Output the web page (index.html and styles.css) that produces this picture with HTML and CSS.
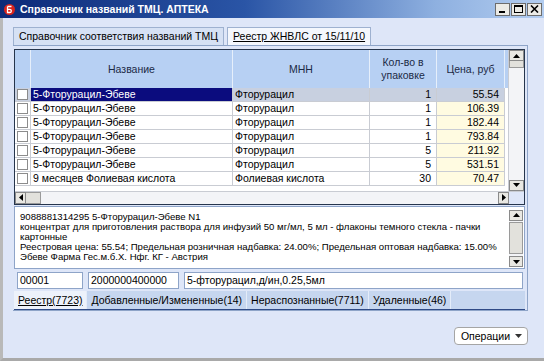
FILE: index.html
```html
<!DOCTYPE html>
<html lang="ru">
<head>
  <meta charset="UTF-8">
  <title>Справочник названий ТМЦ. АПТЕКА</title>
  <link rel="stylesheet" href="styles.css">
</head>
<body>
  <div class="window">
    <div class="titlebar">
      <svg class="app-icon" width="11" height="11" viewBox="0 0 11 11">
        <circle cx="5.5" cy="5.5" r="5.5" fill="#d8231c"/>
        <path d="M3.5 2.5h4M3.5 2.5v6h2.2a1.6 1.6 0 0 0 0-3.2H3.5" stroke="#fff" stroke-width="1.3" fill="none"/>
      </svg>
      <span class="title">Справочник названий ТМЦ. АПТЕКА</span>
      <div class="title-buttons">
        <span class="tbtn"><svg width="9" height="8"><rect x="1" y="6" width="6" height="2" fill="#000"/></svg></span>
        <span class="tbtn"><svg width="9" height="8"><rect x="0.5" y="0.5" width="8" height="7" fill="none" stroke="#000"/><rect x="0" y="0" width="9" height="2" fill="#000"/></svg></span>
        <span class="tbtn"><svg width="9" height="8"><path d="M1 0.5l7 7M8 0.5l-7 7" stroke="#000" stroke-width="1.6"/></svg></span>
      </div>
    </div>

    <div class="client">
      <div class="tabs">
        <div class="tab">Справочник соответствия названий ТМЦ</div>
        <div class="tab tab-active">Реестр ЖНВЛС от 15/11/10</div>
      </div>

      <div class="panel">
        <div class="grid">
          <div class="grid-main">
            <div class="table">
              <div class="th"></div>
              <div class="th">Название</div>
              <div class="th">МНН</div>
              <div class="th">Кол-во в<br>упаковке</div>
              <div class="th">Цена, руб</div>
              <div class="th th-fill"></div>

              <div class="td chk sel-row"><span class="box"></span></div>
              <div class="td sel-cell">5-Фторурацил-Эбеве</div>
              <div class="td sel-row">Фторурацил</div>
              <div class="td num sel-row">1</div>
              <div class="td num sel-row">55.54</div>
              <div class="td fill"></div>

              <div class="td chk"><span class="box"></span></div>
              <div class="td">5-Фторурацил-Эбеве</div>
              <div class="td">Фторурацил</div>
              <div class="td num">1</div>
              <div class="td num price">106.39</div>
              <div class="td fill"></div>

              <div class="td chk"><span class="box"></span></div>
              <div class="td">5-Фторурацил-Эбеве</div>
              <div class="td">Фторурацил</div>
              <div class="td num">1</div>
              <div class="td num price">182.44</div>
              <div class="td fill"></div>

              <div class="td chk"><span class="box"></span></div>
              <div class="td">5-Фторурацил-Эбеве</div>
              <div class="td">Фторурацил</div>
              <div class="td num">1</div>
              <div class="td num price">793.84</div>
              <div class="td fill"></div>

              <div class="td chk"><span class="box"></span></div>
              <div class="td">5-Фторурацил-Эбеве</div>
              <div class="td">Фторурацил</div>
              <div class="td num">5</div>
              <div class="td num price">211.92</div>
              <div class="td fill"></div>

              <div class="td chk"><span class="box"></span></div>
              <div class="td">5-Фторурацил-Эбеве</div>
              <div class="td">Фторурацил</div>
              <div class="td num">5</div>
              <div class="td num price">531.51</div>
              <div class="td fill"></div>

              <div class="td chk"><span class="box"></span></div>
              <div class="td">9 месяцев Фолиевая кислота</div>
              <div class="td">Фолиевая кислота</div>
              <div class="td num">30</div>
              <div class="td num price">70.47</div>
              <div class="td fill"></div>
            </div>
            <div class="vscroll">
              <span class="sbtn"><svg width="7" height="4"><path d="M0 4h7L3.5 0z" fill="#000"/></svg></span>
              <span class="vthumb"></span>
              <span class="vtrack"></span>
              <span class="sbtn"><svg width="7" height="4"><path d="M0 0h7L3.5 4z" fill="#000"/></svg></span>
            </div>
          </div>
          <div class="hscroll">
            <span class="sbtn hbtn"><svg width="4" height="7"><path d="M4 0v7L0 3.5z" fill="#000"/></svg></span>
            <span class="hthumb"></span>
            <span class="htrack"></span>
            <span class="sbtn hbtn"><svg width="4" height="7"><path d="M0 0v7l4-3.5z" fill="#000"/></svg></span>
            <span class="corner"></span>
          </div>
        </div>

        <div class="details">
          <div class="details-text">
            <div>9088881314295 5-Фторурацил-Эбеве N1</div>
            <div>концентрат для приготовления раствора для инфузий 50 мг/мл, 5 мл - флаконы темного стекла - пачки</div>
            <div>картонные</div>
            <div>Реестровая цена: 55.54; Предельная розничная надбавка: 24.00%; Предельная оптовая надбавка: 15.00%</div>
            <div>Эбеве Фарма Гес.м.б.Х. Нфг. КГ - Австрия</div>
          </div>
          <div class="vscroll small">
            <span class="sbtn"><svg width="7" height="4"><path d="M0 4h7L3.5 0z" fill="#000"/></svg></span>
            <span class="dthumb"></span>
            <span class="vtrack"></span>
            <span class="sbtn"><svg width="7" height="4"><path d="M0 0h7L3.5 4z" fill="#000"/></svg></span>
          </div>
        </div>

        <div class="fields">
          <div class="field f-code">00001</div>
          <div class="field f-barcode">2000000400000</div>
          <div class="field f-name">5-фторурацил,д/ин,0.25,5мл</div>
        </div>

        <div class="subtabs">
          <div class="subtab subtab-active">Реестр(7723)</div>
          <div class="subtab">Добавленные/Измененные(14)</div>
          <div class="subtab">Нераспознанные(7711)</div>
          <div class="subtab">Удаленные(46)</div>
        </div>
      </div>

      <div class="footer">
        <button class="ops">Операции <svg width="7" height="4"><path d="M0 0h7L3.5 4z" fill="#333"/></svg></button>
      </div>
    </div>
  </div>
</body>
</html>
```

FILE: styles.css
```css
body {
  margin: 0;
  font-family: "Liberation Sans", Arial, sans-serif;
  font-size: 10.5px;
  color: #000;
  background: #dee6f8;
}

.window {
  width: 544px;
  height: 361px;
  box-sizing: border-box;
  border-left: 3px solid #b9b9b9;
  border-bottom: 3px solid #a9a9a9;
  display: flex;
  flex-direction: column;
  background: #dee6f8;
}

.titlebar {
  height: 18px;
  margin-left: -3px;
  display: flex;
  align-items: center;
  padding-left: 4px;
  background: linear-gradient(to right, #0c2a78, #2a55a6 45%, #8eb0e0 80%, #b3cdf0);
  color: #fff;
}

.app-icon {
  margin-right: 5px;
}

.title {
  font-weight: bold;
  font-size: 10.5px;
}

.title-buttons {
  margin-left: auto;
  display: flex;
  gap: 1px;
  margin-right: 2px;
}

.tbtn {
  width: 13px;
  height: 11px;
  background: #ecebe6;
  border: 1px solid #6d6d6d;
  display: flex;
  align-items: center;
  justify-content: center;
}

.client {
  flex: 1;
  padding: 9px 16px 0 10px;
  display: flex;
  flex-direction: column;
}

.tabs {
  display: flex;
  gap: 3px;
  height: 18px;
}

.tab {
  padding: 0 5px;
  line-height: 17px;
  border: 1px solid #9eb1d0;
  border-bottom: none;
  background: #d6e1f4;
  white-space: nowrap;
}

.tab-active {
  background: #f4f7fd;
  text-decoration: underline;
}

.panel {
  border: 1px solid #8ea4c8;
  border-left: none;
  padding: 3px 2px 0 1px;
  height: 266px;
  box-sizing: border-box;
  display: flex;
  flex-direction: column;
}

.grid {
  border: 1px solid #26354c;
  background: #fff;
  height: 158px;
  box-sizing: border-box;
  display: flex;
  flex-direction: column;
}

.grid-main {
  flex: 1;
  display: flex;
}

.table {
  flex: 1;
  display: grid;
  grid-template-columns: 16px 202px 137px 67px 68px 1fr;
  grid-template-rows: 38px repeat(7, 14px);
  align-content: start;
}

.th {
  background: #b7d0f3;
  color: #1b2a46;
  border-right: 1px solid #e6effb;
  display: flex;
  align-items: center;
  justify-content: center;
  text-align: center;
  line-height: 13px;
}

.th-fill {
  border-right: none;
}

.td {
  border-right: 1px solid #c9ccd3;
  border-bottom: 1px solid #c9ccd3;
  line-height: 13px;
  padding-left: 2px;
  white-space: nowrap;
  overflow: hidden;
}

.num {
  text-align: right;
  padding-right: 5px;
}

.price {
  background: #fffbe1;
}

.fill {
  border: none;
  padding: 0;
}

.chk {
  padding: 0;
  display: flex;
  align-items: center;
  justify-content: center;
}

.box {
  width: 9px;
  height: 9px;
  border: 1px solid #8c8c8c;
  background: #fff;
}

.sel-row {
  background: #c8d0e0;
}

.sel-cell {
  background: #0b0c7e;
  color: #fff;
}

.vscroll {
  width: 15px;
  display: flex;
  flex-direction: column;
  background: #f3f4f7;
  border-left: 1px solid #c9ccd3;
}

.sbtn {
  height: 11px;
  background: #e9e8e3;
  border: 1px solid #8a8a8a;
  box-sizing: border-box;
  display: flex;
  align-items: center;
  justify-content: center;
}

.vthumb {
  height: 6px;
  background: #e2e1dc;
  border: 1px solid #9a9a9a;
  border-top: none;
}

.dthumb {
  height: 30px;
  background: #e2e1dc;
  border: 1px solid #9a9a9a;
  margin: 1px 0;
}

.vtrack,
.htrack {
  flex: 1;
}

.hscroll {
  height: 12px;
  display: flex;
  background: #f3f4f7;
  border-top: 1px solid #c9ccd3;
}

.hbtn {
  width: 11px;
  height: 12px;
}

.hthumb {
  width: 14px;
  background: #e2e1dc;
  border: 1px solid #9a9a9a;
  border-left: none;
}

.corner {
  width: 15px;
  background: #dee6f8;
}

.details {
  margin-top: 1px;
  height: 64px;
  border: 1px solid #8ea4c8;
  background: #fff;
  display: flex;
  box-sizing: border-box;
}

.details-text {
  flex: 1;
  padding: 5px 0 0 5px;
  font-size: 9.6px;
  line-height: 10px;
  white-space: nowrap;
}

.details .vscroll {
  border-left: none;
  margin: 3px 1px 1px 0;
  width: 14px;
}

.fields {
  display: flex;
  gap: 5px;
  padding: 3px 2px 0 3px;
  height: 17px;
}

.field {
  height: 17px;
  box-sizing: border-box;
  border: 1px solid #8ea4c8;
  background: #fff;
  padding-left: 2px;
  line-height: 15px;
}

.f-code {
  width: 66px;
}

.f-barcode {
  width: 91px;
}

.f-name {
  flex: 1;
}

.subtabs {
  margin-top: 2px;
  display: flex;
  height: 18px;
  background: #c6d6ef;
  border-bottom: 1px solid #2f4a86;
}

.subtab {
  padding: 0 4px;
  line-height: 18px;
  border-right: 1px solid #e4ecf9;
  white-space: nowrap;
}

.subtab-active {
  background: #edf2fb;
  text-decoration: underline;
}

.footer {
  display: flex;
  justify-content: flex-end;
  padding-top: 16px;
}

.ops {
  font-family: "Liberation Sans", Arial, sans-serif;
  font-size: 10.5px;
  height: 18px;
  padding: 0 5px 0 6px;
  background: #fff;
  border: 1px solid #a5a5a5;
  border-radius: 4px;
  display: flex;
  align-items: center;
  gap: 5px;
}
```
